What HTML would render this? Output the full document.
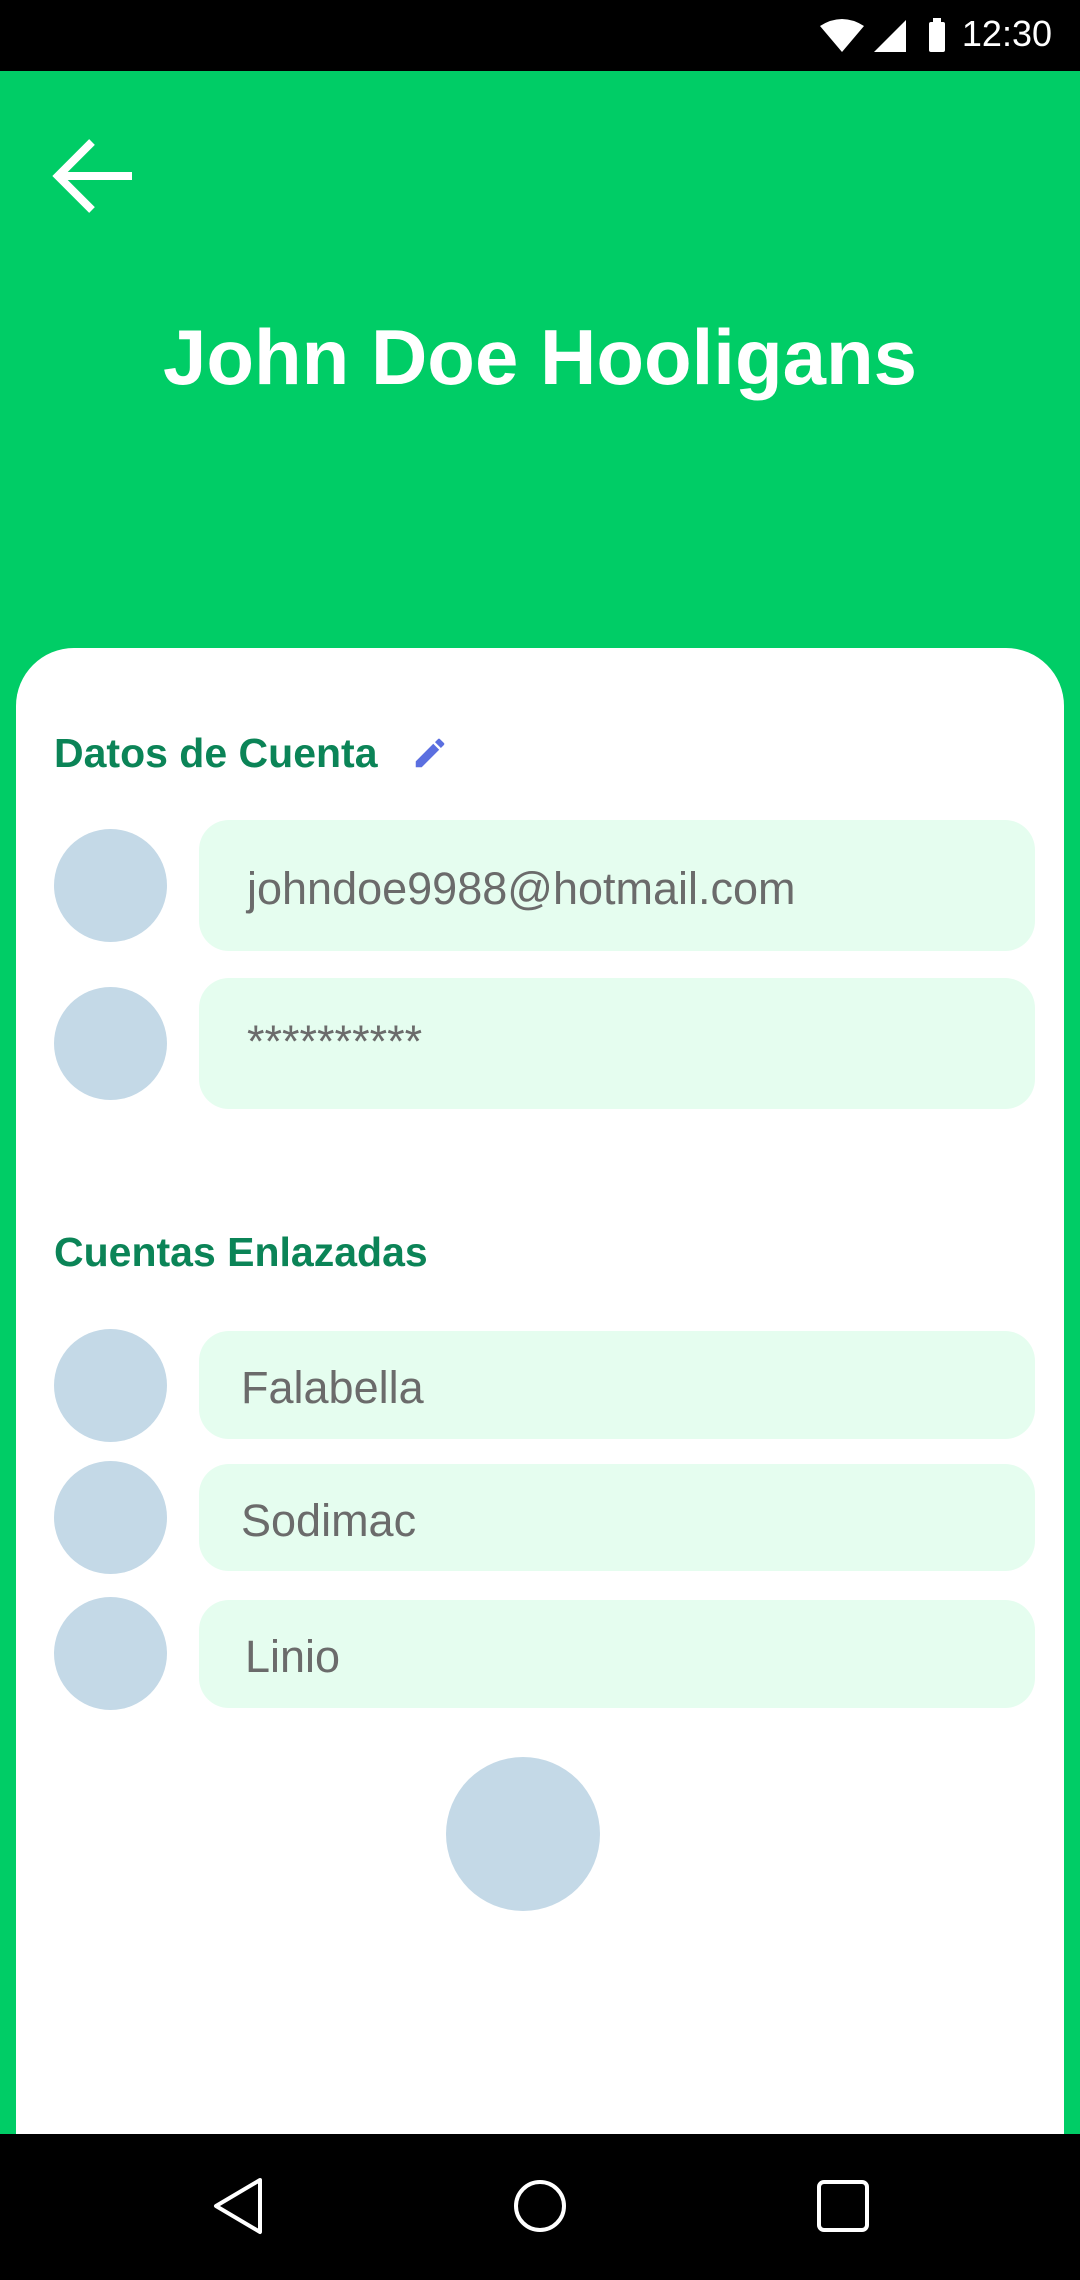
<!DOCTYPE html>
<html><head><meta charset="utf-8"><style>
*{margin:0;padding:0;box-sizing:border-box}
body{width:1080px;height:2280px;background:#00cd66;position:relative;overflow:hidden;font-family:"Liberation Sans","DejaVu Sans",sans-serif}
.abs{position:absolute}
.status{left:0;top:0;width:1080px;height:71px;background:#000}
.nav{left:0;top:2134px;width:1080px;height:146px;background:#000}
.card{left:16px;top:648px;width:1048px;height:1500px;background:#fff;border-radius:58px 58px 0 0}
.h{color:#0b8457;font-weight:bold;font-size:41px;left:54px}
.c{background:#c4d9e7;border-radius:50%;width:113px;height:113px;left:54px}
.b{background:#e5fdef;border-radius:30px;left:199px;width:836px}
.t{color:#6b6b6b;font-size:45px;position:absolute;top:50%;transform:translateY(-50%)}
</style></head><body>
<div class="abs status"></div>
<div class="abs" style="right:28px;top:13px;color:#fff;font-size:36px">12:30</div>
<svg class="abs" style="left:818px;top:18px" width="130" height="36" viewBox="0 0 130 36">
<path d="M2 8 Q24 -6 46 8 L24 34 Z" fill="#fff"/>
<path d="M88 2 L88 34 L56 34 Z" fill="#fff"/>
<rect x="111" y="4" width="16" height="30" rx="2" fill="#fff"/><rect x="115" y="0" width="8" height="5" fill="#fff"/>
</svg>
<svg class="abs" style="left:52px;top:136px" width="84" height="80" viewBox="0 0 84 80">
<path d="M80 40 H8 M40 6 L6 40 L40 74" stroke="#fff" stroke-width="8" fill="none"/>
</svg>
<div class="abs" style="left:0;width:1080px;top:312px;text-align:center;color:#fff;font-weight:bold;font-size:78px">John Doe Hooligans</div>
<div class="abs card"></div>
<div class="abs h" style="top:730px">Datos de Cuenta</div>
<svg class="abs" style="left:410px;top:734px" width="40" height="38" viewBox="0 0 24 24"><path d="M3 17.25V21h3.75L17.81 9.94l-3.75-3.75L3 17.25zM20.71 7.04a1 1 0 000-1.41l-2.34-2.34a1 1 0 00-1.41 0l-1.83 1.83 3.75 3.75 1.83-1.83z" fill="#5b6fe0"/></svg>
<div class="abs c" style="top:829px"></div>
<div class="abs b" style="top:820px;height:131px"><span class="t" style="left:48px;margin-top:3px">johndoe9988@hotmail.com</span></div>
<div class="abs c" style="top:987px"></div>
<div class="abs b" style="top:978px;height:131px"><span class="t" style="left:48px;margin-top:-2px">**********</span></div>
<div class="abs h" style="top:1229px">Cuentas Enlazadas</div>
<div class="abs c" style="top:1329px"></div>
<div class="abs b" style="top:1331px;height:108px"><span class="t" style="left:42px;margin-top:3px">Falabella</span></div>
<div class="abs c" style="top:1461px"></div>
<div class="abs b" style="top:1464px;height:107px"><span class="t" style="left:42px;margin-top:3px">Sodimac</span></div>
<div class="abs c" style="top:1597px"></div>
<div class="abs b" style="top:1600px;height:108px"><span class="t" style="left:46px;margin-top:3px">Linio</span></div>
<div class="abs" style="left:446px;top:1757px;width:154px;height:154px;border-radius:50%;background:#c4d9e7"></div>
<div class="abs nav"></div>
<svg class="abs" style="left:0;top:2134px" width="1080" height="146">
<path d="M260 46 L216 72 L260 98 Z" fill="none" stroke="#fff" stroke-width="4" stroke-linejoin="round"/>
<circle cx="540" cy="72" r="24" fill="none" stroke="#fff" stroke-width="4"/>
<rect x="819" y="48" width="48" height="48" rx="5" fill="none" stroke="#fff" stroke-width="4"/>
</svg>
</body></html>
